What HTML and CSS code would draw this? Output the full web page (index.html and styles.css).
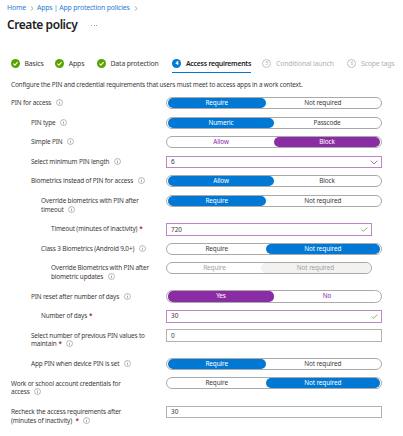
FILE: index.html
```
<!DOCTYPE html>
<html lang="en">
<head>
<meta charset="utf-8">
<title>Create policy</title>
<link rel="stylesheet" href="styles.css">
</head>
<body>
<svg class="defs" aria-hidden="true">
  <symbol id="info" viewBox="0 0 14 14"><circle cx="7" cy="7" r="6" fill="none" stroke="#777" stroke-width="1"/><path d="M7 6v4.5M7 3.5v1.3" stroke="#777" stroke-width="1.2"/></symbol>
  <symbol id="done" viewBox="0 0 18 18"><circle cx="9" cy="9" r="9" fill="#57a300"/><path d="M4.8 9.2l3 3 5.4-5.8" fill="none" stroke="#fff" stroke-width="2.2"/></symbol>
  <symbol id="valid" viewBox="0 0 12 8"><path d="M.8 4.2l3 3L11.2.8" fill="none" stroke="#7fba55" stroke-width="1.6"/></symbol>
  <symbol id="sep" viewBox="0 0 4 6"><path d="M.5.5L3.4 3 .5 5.5" fill="none" stroke="#777" stroke-width=".7"/></symbol>
</svg>
<nav class="crumbs"><a>Home</a><svg class="sep"><use href="#sep"/></svg><a class="crumb-apps">Apps | App protection policies</a><svg class="sep"><use href="#sep"/></svg></nav>
<header class="title"><h1>Create policy</h1><span class="more"><i></i><i></i><i></i></span></header>
<ol class="steps">
  <li class="step basics"><svg class="badge"><use href="#done"/></svg><span>Basics</span></li>
  <li class="step apps"><svg class="badge"><use href="#done"/></svg><span>Apps</span></li>
  <li class="step data"><svg class="badge"><use href="#done"/></svg><span>Data protection</span></li>
  <li class="step current"><b class="badge num">4</b><span>Access requirements</span></li>
  <li class="step pending cond"><b class="badge num">5</b><span>Conditional launch</span></li>
  <li class="step pending"><b class="badge num">6</b><span>Scope tags</span></li>
</ol>
<p class="intro">Configure the PIN and credential requirements that users must meet to access apps in a work context.</p>
<main class="form">
  <div class="row"><label>PIN for access<svg class="info"><use href="#info"/></svg></label><div class="pill"><span class="on">Require</span><span>Not required</span></div></div>
  <div class="row l1"><label>PIN type<svg class="info"><use href="#info"/></svg></label><div class="pill even"><span class="on">Numeric</span><span>Passcode</span></div></div>
  <div class="row l1"><label>Simple PIN<svg class="info"><use href="#info"/></svg></label><div class="pill even edited"><span>Allow</span><span class="on">Block</span></div></div>
  <div class="row l1"><label>Select minimum PIN length<svg class="info"><use href="#info"/></svg></label><div class="field changed"><span>6</span><svg class="chevron" viewBox="0 0 8 5"><path d="M.7.7L4 4 7.3.7" fill="none" stroke="#666" stroke-width=".8"/></svg></div></div>
  <div class="row l1"><label>Biometrics instead of PIN for access<svg class="info"><use href="#info"/></svg></label><div class="pill even"><span class="on">Allow</span><span>Block</span></div></div>
  <div class="row l2 two"><label>Override biometrics with PIN after<br>timeout<svg class="info"><use href="#info"/></svg></label><div class="pill"><span class="on">Require</span><span>Not required</span></div></div>
  <div class="row l3"><label>Timeout (minutes of inactivity)<em>*</em></label><div class="field changed short"><span>720</span><svg class="valid"><use href="#valid"/></svg></div></div>
  <div class="row l2"><label>Class 3 Biometrics (Android 9.0+)<svg class="info"><use href="#info"/></svg></label><div class="pill"><span>Require</span><span class="on">Not required</span></div></div>
  <div class="row l3 two"><label>Override Biometrics with PIN after<br>biometric updates<svg class="info"><use href="#info"/></svg></label><div class="pill short disabled"><span>Require</span><span class="on">Not required</span></div></div>
  <div class="row l1"><label>PIN reset after number of days<svg class="info"><use href="#info"/></svg></label><div class="pill even edited"><span class="on">Yes</span><span>No</span></div></div>
  <div class="row l2"><label>Number of days<em>*</em></label><div class="field changed"><span>30</span><svg class="valid"><use href="#valid"/></svg></div></div>
  <div class="row l1 two"><label>Select number of previous PIN values to<br>maintain<em>*</em><svg class="info"><use href="#info"/></svg></label><div class="field"><span>0</span></div></div>
  <div class="row l1"><label>App PIN when device PIN is set<svg class="info"><use href="#info"/></svg></label><div class="pill"><span class="on">Require</span><span>Not required</span></div></div>
  <div class="row two"><label>Work or school account credentials for<br>access<svg class="info"><use href="#info"/></svg></label><div class="pill"><span>Require</span><span class="on">Not required</span></div></div>
  <div class="row two"><label>Recheck the access requirements after<br>(minutes of inactivity) <em>*</em><svg class="info"><use href="#info"/></svg></label><div class="field"><span>30</span></div></div>
</main>
</body>
</html>
```
FILE: styles.css
```
* { box-sizing: border-box; }
body { margin: 0; height: 436px; overflow: hidden; background: #fff; color: #3b3a39; font: 6.4px/8.7px "Noto Sans", "Open Sans", sans-serif; letter-spacing: -.15px; }
svg { display: block; flex: none; }
.defs { width: 0; height: 0; position: absolute; }
.crumbs { display: flex; align-items: center; height: 16px; padding-left: 7px; color: #2b7cd3; font-size: 6.9px; letter-spacing: -.17px; }
.sep { width: 4px; height: 5px; margin: 1px 3px 0 4px; }
.title { display: flex; align-items: center; height: 18px; padding-left: 7px; }
h1 { margin: 0; font-size: 12px; font-weight: 600; line-height: 18px; color: #222; letter-spacing: -.44px; }
.more { display: flex; gap: 1.5px; margin-left: 14px; }
.more i { width: 1px; height: 1px; background: #999; }
.steps { display: flex; list-style: none; margin: 20px 0 0; padding: 0 0 0 11px; height: 19px; white-space: nowrap; font-size: 6.9px; letter-spacing: -.16px; }
.step { display: flex; flex: none; height: 19px; align-items: center; gap: 4.5px; }
.step span { padding-top: 2.6px; }
.basics { width: 44.3px; }
.apps { width: 41.7px; }
.data { width: 75.5px; }
.badge { width: 9px; height: 9px; flex: none; }
.num { display: flex; align-items: center; justify-content: center; border-radius: 50%; font-size: 5px; line-height: 9px; letter-spacing: 0; background: #0078d4; color: #fff; }
.current { width: 78.5px; border-bottom: 1px solid #0078d4; font-weight: 600; color: #222; margin-right: 11.5px; letter-spacing: -.25px; }
.current span { padding-top: 3.4px; }
.pending { color: #b3b0ad; }
.pending .num { background: none; border: 1px solid #c3c1bf; color: #b3b0ad; font-weight: 400; }
.cond { width: 85px; }
.intro { margin: 7px 0 0 11px; line-height: 10px; height: 17px; white-space: nowrap; }
.form { display: flex; flex-direction: column; gap: 7.32px; padding: .2px 0 0 11px; }
.row { display: flex; height: 12.2px; }
.two { height: 21.05px; }
.row label { width: 155px; flex: none; padding-top: 2.3px; white-space: nowrap; }
.l1 label { padding-left: 20px; }
.l2 label { padding-left: 30px; }
.l3 label { padding-left: 40px; }
.info { display: inline-block; width: 7px; height: 7px; margin-left: 4.5px; vertical-align: -1px; }
em { font-style: normal; color: #a4262c; margin-left: 2px; font-weight: 600; }
.pill { display: flex; width: 216px; height: 12.2px; border: 1px solid #aaa; border-radius: 7px; padding: 0 1px; line-height: 10.8px; text-align: center; letter-spacing: -.1px; }
.pill span { width: 46%; border-radius: 5px; }
.pill span + span { width: 54%; }
.pill.even span { width: 50%; }
.pill .on { background: #0078d4; color: #fff; }
.pill.edited { color: #881fa3; }
.pill.edited .on { background: #8a2da5; color: #fff; }
.pill.short { width: 206px; }
.pill.disabled { color: #a19f9d; }
.pill.disabled .on { background: #f3f2f1; color: #a19f9d; }
.field { display: flex; align-items: center; justify-content: space-between; width: 216px; height: 12.7px; border: 1px solid #b5b3b1; padding: 0 3px 0 4px; letter-spacing: 0; }
.field span { padding-top: 1px; }
.field.short { width: 206px; }
.field.changed { border-color: #bd86cb; }
.chevron { width: 8px; height: 5px; }
.valid { width: 7px; height: 5px; }
```
